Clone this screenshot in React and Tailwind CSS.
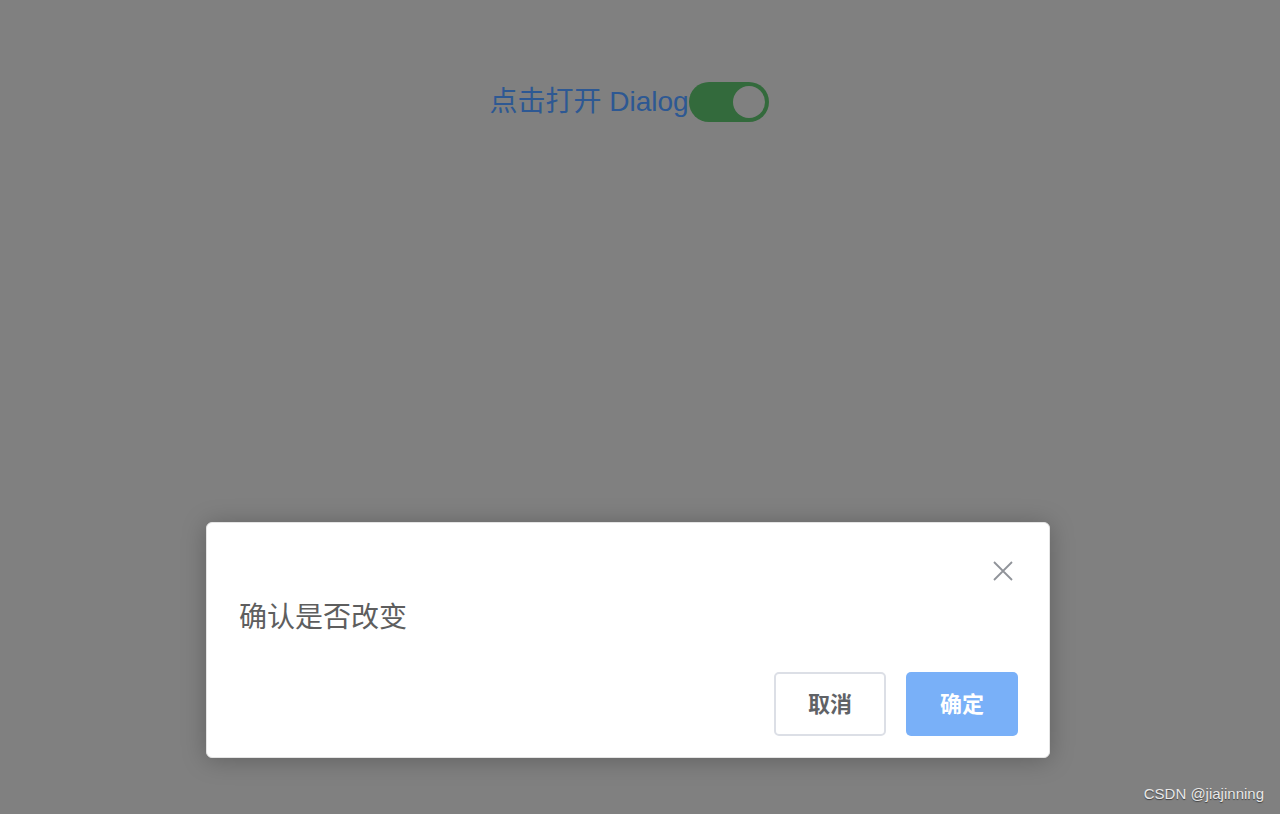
export default function App() {
  const font = { fontFamily: '"Liberation Sans", "Noto Sans CJK SC", sans-serif' }
  return (
    <div className="relative w-[1280px] h-[814px] bg-[#808080] overflow-hidden" style={font}>
      <div className="flex justify-center pt-[82px] pr-[22px]">
        <div className="flex items-center">
          <span className="text-[28px] leading-[40px] text-[#2d5893]">点击打开 Dialog</span>
          <div className="flex items-center justify-end w-[80px] h-[40px] rounded-full bg-[#336a3c] pr-[4px]">
            <div className="w-[32px] h-[32px] rounded-full bg-[#808080]" />
          </div>
        </div>
      </div>

      <div className="flex justify-center pt-[400px] pr-[24px]">
        <div className="w-[844px] h-[236px] bg-white rounded-[6px] border border-[#e4e4e4] shadow-[0_2px_24px_rgba(0,0,0,0.25)] flex flex-col">
          <div className="flex justify-end pt-[37px] pr-[35px]">
            <svg width="22" height="22" viewBox="0 0 22 22" fill="none" stroke="#909399" strokeWidth="1.8">
              <path d="M2 2 L20 20 M20 2 L2 20" />
            </svg>
          </div>
          <div className="pl-[32px] pt-[16px] text-[28px] leading-[40px] text-[#5e5e5e]">确认是否改变</div>
          <div className="flex justify-end gap-[20px] pr-[31px] pt-[34px]">
            <button className="w-[112px] h-[64px] rounded-[5px] border-2 border-[#dcdfe6] bg-white text-[22px] font-bold text-[#606266]">
              取消
            </button>
            <button className="w-[112px] h-[64px] rounded-[5px] bg-[#79b0f8] text-[22px] font-bold text-white">
              确定
            </button>
          </div>
        </div>
      </div>

      <div className="absolute right-[16px] bottom-[9px] text-[15px] text-[#e8e8e8] [text-shadow:0_1px_1px_rgba(0,0,0,0.5)]">
        CSDN @jiajinning
      </div>
    </div>
  )
}
